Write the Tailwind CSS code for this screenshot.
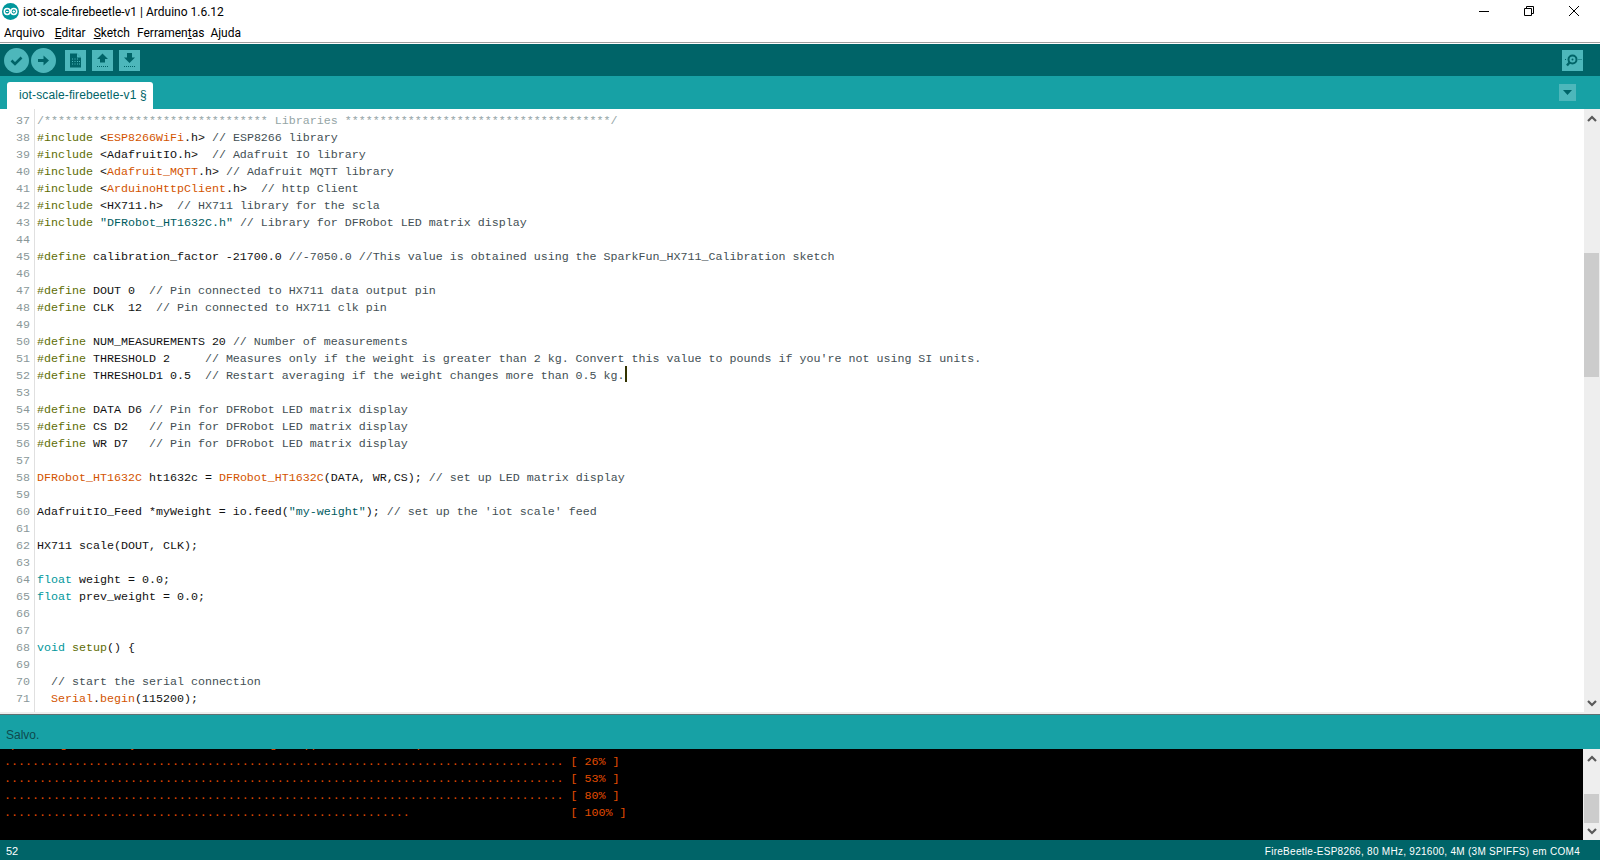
<!DOCTYPE html>
<html lang="en">
<head>
    <meta charset="UTF-8">
    <title>iot-scale-firebeetle-v1 | Arduino 1.6.12</title>
    <script src="https://cdn.jsdelivr.net/npm/@tailwindcss/browser@4"></script>
</head>
<body class="bg-white">
<div class="w-[1600px] h-[860px] flex flex-col overflow-hidden font-['Liberation_Sans',sans-serif]">

    <!-- title bar -->
    <div class="h-[22px] flex items-center shrink-0">
        <svg class="ml-[2px] w-[17px] h-[17px]" viewBox="0 0 17 17">
            <circle cx="8.5" cy="8.5" r="8.5" fill="#00979c"/>
            <circle cx="5.2" cy="8.5" r="2.9" fill="none" stroke="#fff" stroke-width="1.5"/>
            <circle cx="11.8" cy="8.5" r="2.9" fill="none" stroke="#fff" stroke-width="1.5"/>
            <path d="M4 8.5h2.4M10.6 8.5H13M11.8 7.3v2.4" stroke="#fff" stroke-width="1"/>
        </svg>
        <span class="ml-[4px] pt-[1px] text-[12px] text-black font-['Roboto',sans-serif]">iot-scale-firebeetle-v1 | Arduino 1.6.12</span>
        <div class="ml-auto mr-[4px] flex">
            <div class="w-[45px] flex justify-center">
                <svg class="w-[10px] h-[10px]" viewBox="0 0 10 10"><path d="M0 5.5h10" stroke="#000" stroke-width="1"/></svg>
            </div>
            <div class="w-[45px] flex justify-center">
                <svg class="w-[10px] h-[10px]" viewBox="0 0 10 10" fill="none"><path d="M.5 2.5h7v7h-7zM2.5 2.5v-2h7v7h-2" stroke="#000"/></svg>
            </div>
            <div class="w-[45px] flex justify-center">
                <svg class="w-[10px] h-[10px]" viewBox="0 0 10 10"><path d="M0 0l10 10M10 0L0 10" stroke="#000" stroke-width="1"/></svg>
            </div>
        </div>
    </div>

    <!-- menu bar -->
    <div class="h-[21px] shrink-0 flex items-start pt-[2px] pl-[4px] border-b border-[#a0a0a0] text-[12px] text-black font-['Roboto',sans-serif]">
        <span>Arquivo</span>
        <span class="ml-[10px]"><u>E</u>ditar</span>
        <span class="ml-[8px]"><u>S</u>ketch</span>
        <span class="ml-[7px]">Ferramen<u>t</u>as</span>
        <span class="ml-[6px]">Ajuda</span>
    </div>

    <!-- toolbar -->
    <div class="mt-[1px] h-[32px] shrink-0 bg-[#006468] flex items-center pl-[4px] pr-[17px]">
        <svg class="w-[25px] h-[25px]" viewBox="0 0 25 25">
            <circle cx="12.5" cy="12.5" r="12.5" fill="#4db7bb"/>
            <path d="M7.5 12.5l3.5 3.5 6.5-6.5" fill="none" stroke="#006468" stroke-width="2.6"/>
        </svg>
        <svg class="ml-[2px] w-[25px] h-[25px]" viewBox="0 0 25 25">
            <circle cx="12.5" cy="12.5" r="12.5" fill="#4db7bb"/>
            <path d="M7 11h5.5V7.5L18 12.5l-5.5 5V14H7z" fill="#006468"/>
        </svg>
        <svg class="ml-[9px] w-[21px] h-[21px]" viewBox="0 0 21 21">
            <rect width="21" height="21" fill="#4db7bb"/>
            <path d="M5 3.5h7l4 4v10H5z" fill="#006468"/>
            <path d="M12 3.5v4h4" fill="#4db7bb"/>
            <path d="M7 9h1M9.5 9h1M12 9h1M7 11.5h1M9.5 11.5h1M12 11.5h1M14 11.5h1M7 14h1M9.5 14h1M12 14h1M14 14h1" stroke="#4db7bb" stroke-width="1.2"/>
        </svg>
        <svg class="ml-[6px] w-[21px] h-[21px]" viewBox="0 0 21 21">
            <rect width="21" height="21" fill="#4db7bb"/>
            <path d="M10.5 3.5L16 9h-3v3.5H8V9H5z" fill="#006468"/>
            <path d="M5 16.5h11" stroke="#006468" stroke-width="1" stroke-dasharray="1 1"/>
        </svg>
        <svg class="ml-[6px] w-[21px] h-[21px]" viewBox="0 0 21 21">
            <rect width="21" height="21" fill="#4db7bb"/>
            <path d="M8 3h5v4.5h3L10.5 13 5 7.5h3z" fill="#006468"/>
            <path d="M5 16.5h11" stroke="#006468" stroke-width="1" stroke-dasharray="1 1"/>
        </svg>
        <svg class="ml-auto w-[21px] h-[21px]" viewBox="0 0 21 21">
            <rect width="21" height="21" fill="#4db7bb"/>
            <circle cx="10.5" cy="9.5" r="4" fill="none" stroke="#006468" stroke-width="2"/>
            <circle cx="10.5" cy="9.5" r="1" fill="#006468"/>
            <path d="M7.5 12.5l-2.5 3" stroke="#006468" stroke-width="2.4"/>
            <path d="M3 9.5h1M16.5 9.5h1M18.5 9.5h1" stroke="#006468"/>
        </svg>
    </div>

    <!-- tabs -->
    <div class="h-[33px] shrink-0 bg-[#17a1a5] flex items-end pl-[7px] pr-[24px]">
        <div class="h-[27px] w-[146px] bg-white rounded-t-[3px] pl-[12px] text-[12px] tracking-[0.12px] leading-[27px] text-[#006468] whitespace-nowrap">iot-scale-firebeetle-v1 §</div>
        <div class="ml-auto mb-[8px] w-[17px] h-[17px] bg-[#4db7bb] flex items-center justify-center">
            <svg class="w-[9px] h-[5px]" viewBox="0 0 9 5"><path d="M0 0h9L4.5 5z" fill="#006468"/></svg>
        </div>
    </div>

    <!-- editor -->
    <div class="h-[603px] shrink-0 flex font-['Liberation_Mono',monospace] text-[11.67px] leading-[17px]">
        <div class="w-[35px] shrink-0 border-r border-[#e0e0e0] pt-[4px] pr-[4px] text-right text-[#8a9799] whitespace-pre-line overflow-hidden">37
38
39
40
41
42
43
44
45
46
47
48
49
50
51
52
53
54
55
56
57
58
59
60
61
62
63
64
65
66
67
68
69
70
71</div>
        <div class="flex-1 min-w-0 pt-[4px] pl-[2px] text-[#111] whitespace-pre overflow-hidden flex flex-col">
            <div class="h-[17px] text-[#95a5a6]">/******************************** Libraries **************************************/</div>
            <div class="h-[17px]"><span class="text-[#5e6d03]">#include</span> &lt;<span class="text-[#d35400]">ESP8266WiFi</span>.h&gt; <span class="text-[#434f54]">// ESP8266 library</span></div>
            <div class="h-[17px]"><span class="text-[#5e6d03]">#include</span> &lt;AdafruitIO.h&gt;  <span class="text-[#434f54]">// Adafruit IO library</span></div>
            <div class="h-[17px]"><span class="text-[#5e6d03]">#include</span> &lt;<span class="text-[#d35400]">Adafruit_MQTT</span>.h&gt; <span class="text-[#434f54]">// Adafruit MQTT library</span></div>
            <div class="h-[17px]"><span class="text-[#5e6d03]">#include</span> &lt;<span class="text-[#d35400]">ArduinoHttpClient</span>.h&gt;  <span class="text-[#434f54]">// http Client</span></div>
            <div class="h-[17px]"><span class="text-[#5e6d03]">#include</span> &lt;HX711.h&gt;  <span class="text-[#434f54]">// HX711 library for the scla</span></div>
            <div class="h-[17px]"><span class="text-[#5e6d03]">#include</span> <span class="text-[#005c5f]">"DFRobot_HT1632C.h"</span> <span class="text-[#434f54]">// Library for DFRobot LED matrix display</span></div>
            <div class="h-[17px]"></div>
            <div class="h-[17px]"><span class="text-[#5e6d03]">#define</span> calibration_factor -21700.0 <span class="text-[#434f54]">//-7050.0 //This value is obtained using the SparkFun_HX711_Calibration sketch</span></div>
            <div class="h-[17px]"></div>
            <div class="h-[17px]"><span class="text-[#5e6d03]">#define</span> DOUT 0  <span class="text-[#434f54]">// Pin connected to HX711 data output pin</span></div>
            <div class="h-[17px]"><span class="text-[#5e6d03]">#define</span> CLK  12  <span class="text-[#434f54]">// Pin connected to HX711 clk pin</span></div>
            <div class="h-[17px]"></div>
            <div class="h-[17px]"><span class="text-[#5e6d03]">#define</span> NUM_MEASUREMENTS 20 <span class="text-[#434f54]">// Number of measurements</span></div>
            <div class="h-[17px]"><span class="text-[#5e6d03]">#define</span> THRESHOLD 2     <span class="text-[#434f54]">// Measures only if the weight is greater than 2 kg. Convert this value to pounds if you're not using SI units.</span></div>
            <div class="h-[17px] flex"><span><span class="text-[#5e6d03]">#define</span> THRESHOLD1 0.5  <span class="text-[#434f54]">// Restart averaging if the weight changes more than 0.5 kg.</span></span><span class="w-[2px] h-[16px] -mt-[2px] bg-[#333300]"></span></div>
            <div class="h-[17px]"></div>
            <div class="h-[17px]"><span class="text-[#5e6d03]">#define</span> DATA D6 <span class="text-[#434f54]">// Pin for DFRobot LED matrix display</span></div>
            <div class="h-[17px]"><span class="text-[#5e6d03]">#define</span> CS D2   <span class="text-[#434f54]">// Pin for DFRobot LED matrix display</span></div>
            <div class="h-[17px]"><span class="text-[#5e6d03]">#define</span> WR D7   <span class="text-[#434f54]">// Pin for DFRobot LED matrix display</span></div>
            <div class="h-[17px]"></div>
            <div class="h-[17px]"><span class="text-[#d35400]">DFRobot_HT1632C</span> ht1632c = <span class="text-[#d35400]">DFRobot_HT1632C</span>(DATA, WR,CS); <span class="text-[#434f54]">// set up LED matrix display</span></div>
            <div class="h-[17px]"></div>
            <div class="h-[17px]">AdafruitIO_Feed *myWeight = io.feed(<span class="text-[#005c5f]">"my-weight"</span>); <span class="text-[#434f54]">// set up the 'iot scale' feed</span></div>
            <div class="h-[17px]"></div>
            <div class="h-[17px]">HX711 scale(DOUT, CLK);</div>
            <div class="h-[17px]"></div>
            <div class="h-[17px]"><span class="text-[#00979c]">float</span> weight = 0.0;</div>
            <div class="h-[17px]"><span class="text-[#00979c]">float</span> prev_weight = 0.0;</div>
            <div class="h-[17px]"></div>
            <div class="h-[17px]"></div>
            <div class="h-[17px]"><span class="text-[#00979c]">void</span> <span class="text-[#5e6d03]">setup</span>() {</div>
            <div class="h-[17px]"></div>
            <div class="h-[17px]">  <span class="text-[#434f54]">// start the serial connection</span></div>
            <div class="h-[17px]">  <span class="text-[#d35400]">Serial</span>.<span class="text-[#d35400]">begin</span>(115200);</div>
        </div>
        <div class="w-[16px] shrink-0 bg-[#eeeeee] flex flex-col">
            <div class="h-[18px] flex items-center justify-center">
                <svg class="w-[10px] h-[7px]" viewBox="0 0 10 7"><path d="M1 6l4-4 4 4" fill="none" stroke="#5a5a5a" stroke-width="2.2"/></svg>
            </div>
            <div class="mt-[126px] w-[15px] h-[124px] bg-[#cccccc]"></div>
            <div class="mt-auto h-[18px] flex items-center justify-center">
                <svg class="w-[10px] h-[7px]" viewBox="0 0 10 7"><path d="M1 1l4 4 4-4" fill="none" stroke="#5a5a5a" stroke-width="2.2"/></svg>
            </div>
        </div>
    </div>
    <div class="h-[3px] shrink-0 bg-[#eeeeee] border-b border-[#5f7072]"></div>

    <!-- status -->
    <div class="h-[34px] shrink-0 bg-[#17a1a5] pl-[6px] text-[12px] leading-[40px] text-[#0e4a4e]">Salvo.</div>

    <!-- console -->
    <div class="h-[91px] shrink-0 bg-black flex">
        <div class="flex-1 min-w-0 pl-[4px] pb-[18px] flex flex-col justify-end overflow-hidden whitespace-pre font-['Liberation_Mono',monospace] text-[11.67px] leading-[17px] text-[#e34c00]">
            <div class="h-[17px] shrink-0">Uploading 301312 bytes from C:\Users\Igor\AppData\Local\Temp\arduino_build_123456/iot-scale-firebeetle-v1.ino.bin to flash at 0x00000000</div>
            <div class="h-[17px] shrink-0">................................................................................ [ 26% ]</div>
            <div class="h-[17px] shrink-0">................................................................................ [ 53% ]</div>
            <div class="h-[17px] shrink-0">................................................................................ [ 80% ]</div>
            <div class="h-[17px] shrink-0">..........................................................                       [ 100% ]</div>
        </div>
        <div class="w-[17px] shrink-0 bg-[#eeeeee] pl-[1px] flex flex-col">
            <div class="h-[18px] flex items-center justify-center">
                <svg class="w-[10px] h-[7px]" viewBox="0 0 10 7"><path d="M1 6l4-4 4 4" fill="none" stroke="#5a5a5a" stroke-width="2.2"/></svg>
            </div>
            <div class="mt-[27px] w-[15px] h-[29px] bg-[#cccccc]"></div>
            <div class="mt-auto h-[17px] flex items-center justify-center">
                <svg class="w-[10px] h-[7px]" viewBox="0 0 10 7"><path d="M1 1l4 4 4-4" fill="none" stroke="#5a5a5a" stroke-width="2.2"/></svg>
            </div>
        </div>
    </div>

    <!-- footer -->
    <div class="h-[20px] shrink-0 bg-[#006468] flex items-center justify-between pl-[6px] pr-[20px] text-white pt-[2px]">
        <span class="text-[11px]">52</span>
        <span class="text-[10px] tracking-[0.28px]">FireBeetle-ESP8266, 80 MHz, 921600, 4M (3M SPIFFS) em COM4</span>
    </div>
</div>
</body>
</html>
